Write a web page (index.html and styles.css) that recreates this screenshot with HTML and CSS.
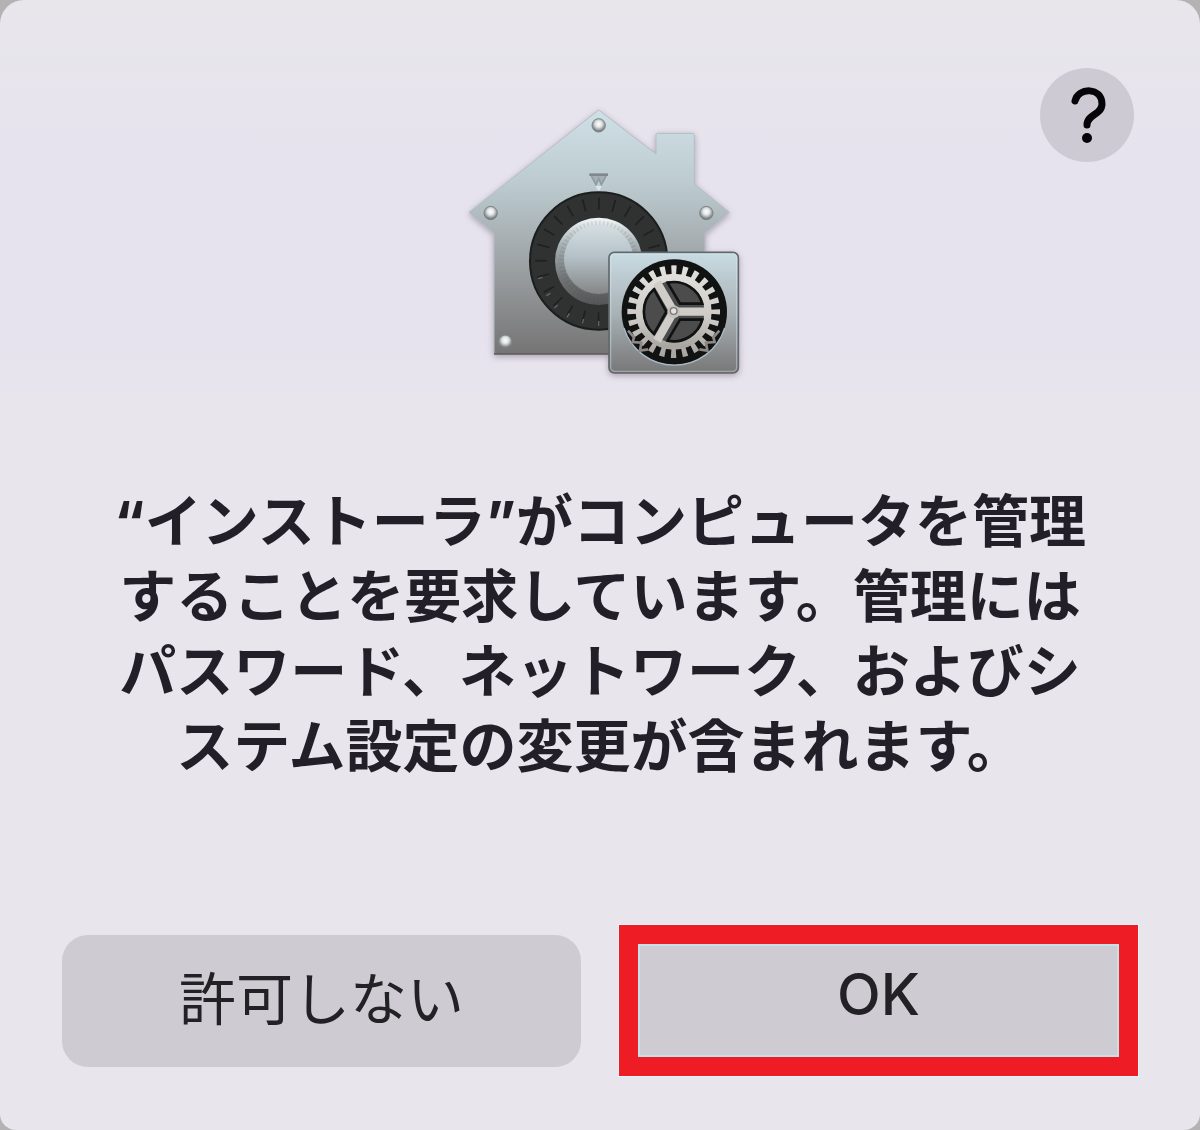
FILE: index.html
```html
<!DOCTYPE html>
<html lang="ja">
<head>
  <meta charset="UTF-8">
  <meta name="viewport" content="width=device-width, initial-scale=1.0">
  <title>インストーラ</title>
  <link rel="stylesheet" href="styles.css">
</head>
<body>
  <main class="dialog" role="alertdialog" aria-labelledby="message">
    <header class="dialog-header">
      <svg class="app-icon" viewBox="0 0 900 900" aria-hidden="true">
        <defs>
          <linearGradient id="house" x1="0" y1="0" x2="0" y2="1">
            <stop offset="0" stop-color="#cfe0e6"/>
            <stop offset="0.3" stop-color="#bccbd0"/>
            <stop offset="0.6" stop-color="#a0a6a9"/>
            <stop offset="1" stop-color="#757474"/>
          </linearGradient>
          <linearGradient id="knob-rim" x1="0" y1="0" x2="0" y2="1">
            <stop offset="0" stop-color="#f3f7f8"/>
            <stop offset="0.3" stop-color="#a9b3b7"/>
            <stop offset="0.7" stop-color="#717476"/>
            <stop offset="1" stop-color="#545555"/>
          </linearGradient>
          <linearGradient id="knob-face" x1="0" y1="0" x2="0" y2="1">
            <stop offset="0" stop-color="#d5dfe3"/>
            <stop offset="0.45" stop-color="#b5c2c8"/>
            <stop offset="1" stop-color="#858687"/>
          </linearGradient>
          <linearGradient id="tile" x1="0" y1="0" x2="0" y2="1">
            <stop offset="0" stop-color="#c9dce3"/>
            <stop offset="0.5" stop-color="#a9b2b6"/>
            <stop offset="1" stop-color="#777777"/>
          </linearGradient>
          <linearGradient id="gear" x1="0" y1="0" x2="0" y2="1">
            <stop offset="0" stop-color="#e0dfdc"/>
            <stop offset="0.6" stop-color="#cdcac6"/>
            <stop offset="1" stop-color="#aaa6a2"/>
          </linearGradient>
          <radialGradient id="screw" cx="0.5" cy="0.4" r="0.6">
            <stop offset="0" stop-color="#ffffff"/>
            <stop offset="0.4" stop-color="#e2e5e6"/>
            <stop offset="1" stop-color="#5d6366"/>
          </radialGradient>
        </defs>

        <!-- house -->
        <path d="M446 60 L618 192 V134 Q618 130 622 130 H729 Q733 130 733 134 V282 L838 367 L765 430 V793 H132 V430 L57 367 Z" fill="url(#house)" stroke="#b4bfc4" stroke-width="3" stroke-linejoin="round"/>
        <path d="M132 792 H765" stroke="#595959" stroke-width="4"/>

        <g fill="url(#screw)" stroke="#7e8588" stroke-width="3">
          <circle cx="446" cy="106" r="20"/>
          <circle cx="122" cy="369" r="20"/>
          <circle cx="769" cy="369" r="20"/>
          <circle cx="166" cy="755" r="20"/>
        </g>

        <!-- pointer above the dial -->
        <path d="M418 254 H474" stroke="#7f898d" stroke-width="8"/>
        <path d="M424 258 L438 284 L446 266 L454 284 L468 258" fill="#a4b0b5" stroke="#8f9ba0" stroke-width="5"/>
        <path d="M436 288 H456 L446 304 Z" fill="#dce6ea"/>

        <!-- dial -->
        <circle cx="446" cy="513" r="206" fill="#303131" stroke="#1c1d1d" stroke-width="6"/>
        <circle cx="446" cy="513" r="172" fill="none" stroke="#1f2020" stroke-width="36" pathLength="288" stroke-dasharray="1.4 10.6" stroke-dashoffset="0.7"/>
        <path d="M264 566 l14 -4 M289 617 l12 -7 M313 654 l10 -9 M351 682 l7 -12 M397 700 l4 -13 M446 707 v-14" stroke="#666666" stroke-width="4"/>
        <circle cx="446" cy="514" r="131" fill="url(#knob-rim)"/>
        <circle cx="446" cy="512" r="112" fill="none" stroke="#454646" stroke-opacity="0.12" stroke-width="16" pathLength="120" stroke-dasharray="1 1"/>
        <circle cx="446" cy="508" r="104" fill="url(#knob-face)"/>

        <!-- settings tile -->
        <rect x="477" y="487" width="388" height="362" rx="16" fill="url(#tile)" stroke="#62696c" stroke-width="5"/>
        <rect x="482" y="492" width="378" height="352" rx="12" fill="none" stroke="#dceaf0" stroke-opacity="0.4" stroke-width="4"/>
        <circle cx="673" cy="666" r="158" fill="#111212"/>
        <path d="M522 714 A158 158 0 0 0 824 714" fill="none" stroke="#a9bac5" stroke-width="4"/>
        <circle cx="671" cy="665" r="100" fill="#4c4c4c"/>
        <g fill="none" stroke="url(#gear)">
          <circle cx="671" cy="665" r="124" stroke-width="30" pathLength="240" stroke-dasharray="4.6 5.4" stroke-dashoffset="2.3"/>
          <circle cx="671" cy="665" r="103" stroke-width="22"/>
        </g>
        <g fill="none" stroke="#111212" stroke-width="8">
          <path d="M653 578 A89 89 0 0 1 757 641 H690 Z"/>
          <path d="M757 689 A89 89 0 0 1 653 752 L690 689 Z"/>
          <path d="M612 598 A89 89 0 0 0 612 732 L649 665 Z"/>
        </g>
        <path d="M671 665 H771 M671 665 L621 578 M671 665 L621 752" stroke="#d0cdc9" stroke-width="25"/>
        <circle cx="671" cy="665" r="19" fill="#c5c2be"/>
        <circle cx="671" cy="663" r="10" fill="#e3e1df" stroke="#7b7876" stroke-width="4"/>
        <path d="M534 722 l18 20 l-4 14 l26 2 l-4 24 l24 -4 M808 722 l-18 20 l4 14 l-26 2 l4 24 l-24 -4" fill="none" stroke="#8d8883" stroke-width="8"/>
      </svg>
      <button class="help" type="button" aria-label="ヘルプ">
        <svg class="help-icon" viewBox="0 0 94 94" aria-hidden="true">
          <path d="M35 33 C38 19 62 19 62 36 C62 47 47 46 47 57" fill="none" stroke="#050408" stroke-width="7" stroke-linecap="round"/>
          <circle cx="47" cy="70" r="5" fill="#050408"/>
        </svg>
      </button>
    </header>

    <h1 class="message" id="message">“インストーラ”がコンピュータを管理<br>することを要求しています。管理には<br>パスワード、ネットワーク、およびシ<br>ステム設定の変更が含まれます。</h1>

    <div class="actions">
      <button class="button" type="button">許可しない</button>
      <button class="button button-ok" type="button">OK</button>
    </div>
  </main>
</body>
</html>
```
FILE: styles.css
```css
* {
  box-sizing: border-box;
}

body {
  margin: 0;
  background: #b4b3b4;
  font-family: Inter, "Noto Sans CJK JP", sans-serif;
}

.dialog {
  display: flex;
  flex-direction: column;
  min-height: 100vh;
  padding: 68px 62px 54px;
  border-radius: 24px 24px 16px 16px;
  background: linear-gradient(#e8e6eb, #e6e3ee 160px, #e6e3ee 340px, #e8e5ec 420px);
}

.dialog-header {
  display: grid;
  grid-template-columns: 1fr auto 1fr;
  align-items: start;
}

.app-icon {
  grid-column: 2;
  width: 300px;
  height: 300px;
  margin-top: 22px;
  filter: drop-shadow(0 2px 3px rgba(70, 40, 70, 0.35));
}

.help {
  justify-self: end;
  width: 94px;
  height: 94px;
  margin-right: 4px;
  padding: 0;
  border: none;
  border-radius: 50%;
  background: #cdcad3;
  cursor: pointer;
}

.help-icon {
  display: block;
  width: 100%;
}

.message {
  margin: 94px 0 0;
  color: #221f28;
  font-size: 57px;
  font-weight: 700;
  line-height: 75px;
  text-align: center;
}

.actions {
  display: grid;
  grid-template-columns: 1fr 1fr;
  align-items: center;
  gap: 38px;
  margin-top: auto;
}

.button {
  height: 132px;
  padding: 0 0 12px;
  border: none;
  border-radius: 26px;
  background: #cecbd2;
  color: #222226;
  font-family: inherit;
  font-size: 57px;
  cursor: pointer;
}

.button-ok {
  height: 151px;
  border: 19px solid #ee1c24;
  border-radius: 0;
  box-shadow: inset 0 0 0 2px #c5e0e6, 0 0 0 1px #e2f5f8;
  font-weight: 500;
}

.button:active {
  background: #bbb8c0;
}
```
